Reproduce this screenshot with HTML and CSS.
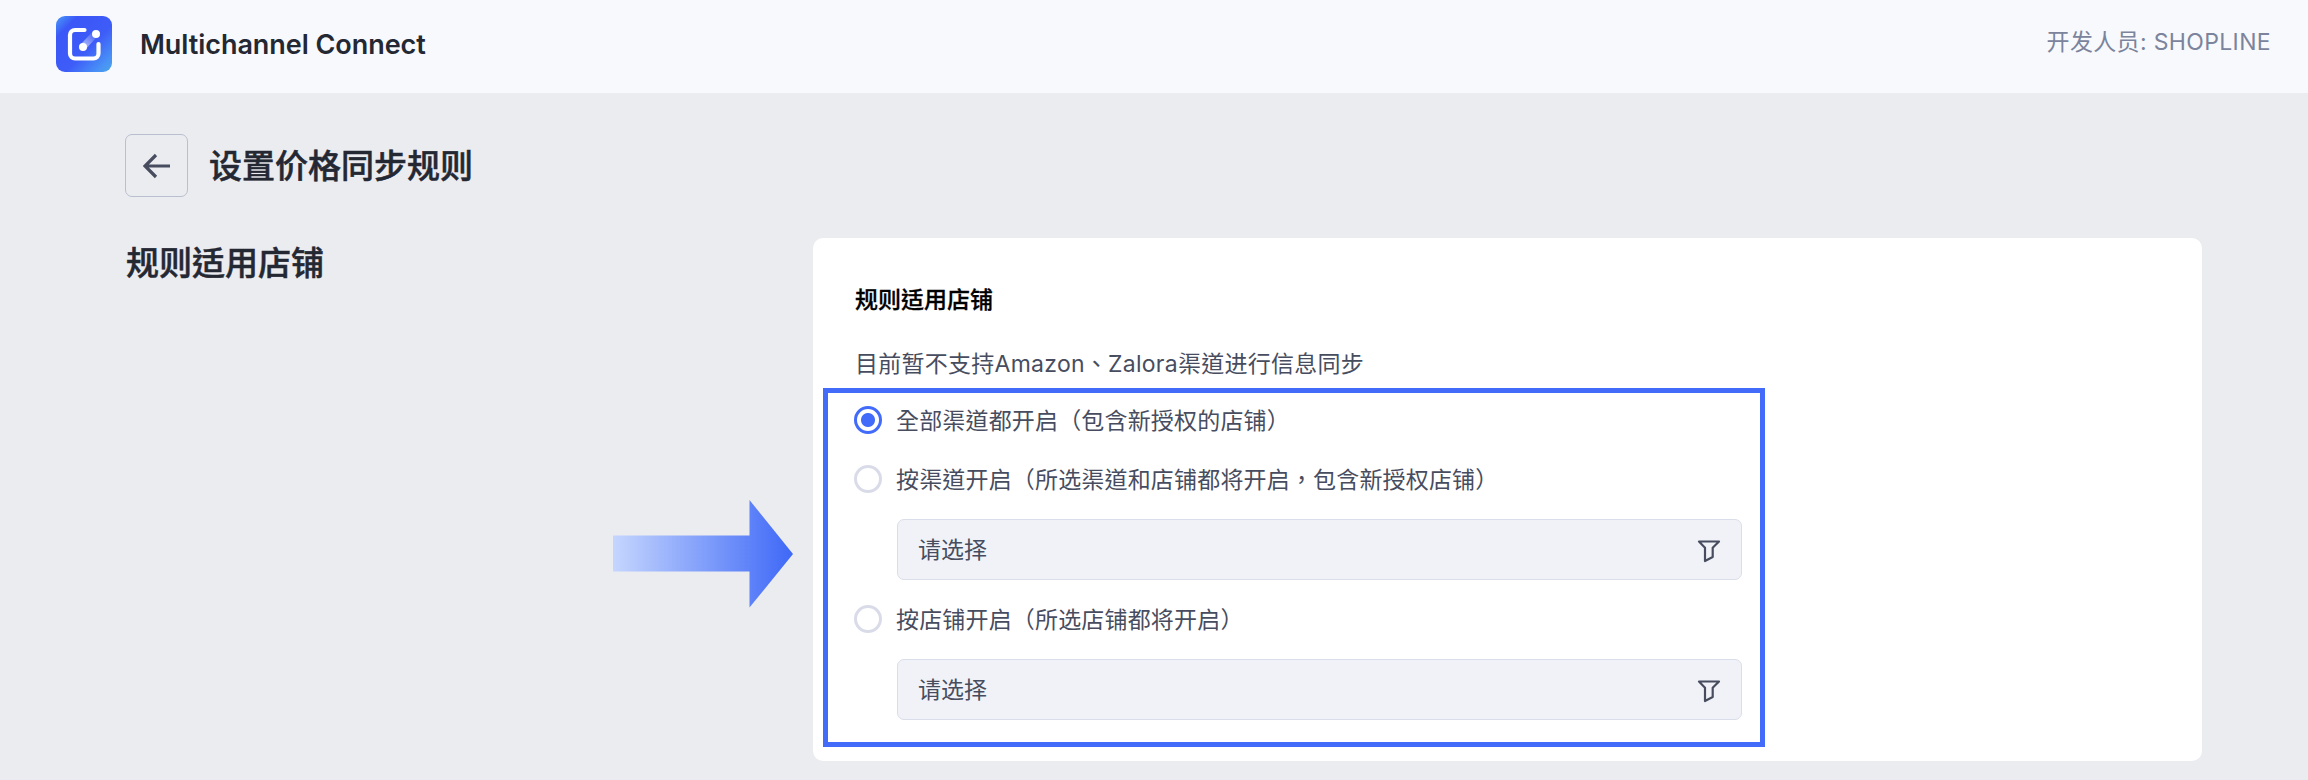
FILE: index.html
```html
<!DOCTYPE html>
<html lang="zh-TW">
  <head>
    <meta charset="UTF-8" />
    <meta name="viewport" content="width=device-width, initial-scale=1.0" />
    <title>Multichannel Connect</title>
    <link rel="stylesheet" href="styles.css">
  </head>
  <body>
    <header class="header">
      <svg class="logo" viewBox="0 0 56 56">
        <defs>
          <linearGradient id="logo_bg" x1="0" y1="0" x2="1" y2="1">
            <stop offset="0" stop-color="#4a9cf8" />
            <stop offset="0.2" stop-color="#3b57f7" />
            <stop offset="0.58" stop-color="#3e5cf8" />
            <stop offset="0.85" stop-color="#4890f6" />
            <stop offset="1" stop-color="#4ca6e8" />
          </linearGradient>
          <linearGradient id="logo_trail" gradientUnits="userSpaceOnUse" x1="27" y1="31" x2="39" y2="18">
            <stop offset="0" stop-color="#fff" stop-opacity="0.6" />
            <stop offset="1" stop-color="#fff" stop-opacity="0.05" />
          </linearGradient>
        </defs>
        <rect width="56" height="56" rx="9" fill="url(#logo_bg)" />
        <path d="M27 31L38 19" stroke="url(#logo_trail)" stroke-width="7" fill="none" />
        <path d="M28.500 14H19a5 5 0 0 0-5 5v18.500a5 5 0 0 0 5 5h18.500a5 5 0 0 0 5-5V28" fill="none" stroke="#fff" stroke-width="4.200" stroke-linecap="round" />
        <circle cx="27" cy="31" r="4" fill="#fff" />
        <circle cx="40" cy="18" r="4" fill="#fff" />
      </svg>
      <h1 class="app-name">Multichannel Connect</h1>
      <span class="developer">开发人员: SHOPLINE</span>
    </header>
    <main class="page">
      <div class="page-title">
        <button class="back" aria-label="返回">
          <svg width="28" height="26" viewBox="0 0 28 26">
            <path d="M27 13H2M13 2L2 13L13 24" />
          </svg>
        </button>
        <h2>设置价格同步规则</h2>
      </div>
      <div class="content">
        <h2 class="side-title">规则适用店铺</h2>
        <section class="card">
          <h3>规则适用店铺</h3>
          <p class="hint">目前暂不支持Amazon、Zalora渠道进行信息同步</p>
          <div class="options">
            <label class="option">
              <input type="radio" name="scope" checked />
              <span>全部渠道都开启（包含新授权的店铺）</span>
            </label>
            <label class="option">
              <input type="radio" name="scope" />
              <span>按渠道开启（所选渠道和店铺都将开启，包含新授权店铺）</span>
            </label>
            <div class="select">
              <span>请选择</span>
              <svg class="filter" viewBox="0 0 24 24">
                <path d="M2 2.500H22L15.700 8.700V18L8 22V8.700Z" />
              </svg>
            </div>
            <label class="option">
              <input type="radio" name="scope" />
              <span>按店铺开启（所选店铺都将开启）</span>
            </label>
            <div class="select">
              <span>请选择</span>
              <svg class="filter" viewBox="0 0 24 24">
                <path d="M2 2.500H22L15.700 8.700V18L8 22V8.700Z" />
              </svg>
            </div>
          </div>
          <svg class="pointer" viewBox="0 0 180 108">
            <defs>
              <linearGradient id="pointer_fill" x1="0" y1="0" x2="1" y2="0">
                <stop offset="0" stop-color="#c5d6fe" />
                <stop offset="1" stop-color="#3e68f7" />
              </linearGradient>
            </defs>
            <path d="M0 35.500H136.500V0L180 54L136.500 107.500V71.500H0Z" fill="url(#pointer_fill)" />
          </svg>
        </section>
      </div>
    </main>
  </body>
</html>
```
FILE: styles.css
```css
* {
  box-sizing: border-box;
}
body {
  font-family: Inter, "Noto Sans CJK TC", sans-serif;
  background-color: #ebecf0;
  color: #474d5e;
  font-size: 23px;
  margin: 0;
}
h1,
h2,
h3,
p {
  margin: 0;
}
.header {
  display: flex;
  align-items: center;
  height: 93px;
  padding: 0 37px 5px 56px;
  background-color: #f7f9fd;
}
.logo {
  width: 56px;
  height: 56px;
}
.app-name {
  margin-left: 28px;
  font-size: 27px;
  font-weight: 600;
  letter-spacing: -0.05px;
  color: #242833;
}
.developer {
  margin-left: auto;
  padding-bottom: 8px;
  letter-spacing: 0.35px;
  color: #7b849c;
}
.page {
  padding: 41px 106px 0 125px;
}
.page-title {
  display: flex;
  align-items: center;
  gap: 21px;
  height: 63px;
}
h2 {
  font-size: 33px;
  font-weight: 500;
  line-height: 48px;
  color: #242833;
  -webkit-text-stroke: 0.5px #242833;
}
.back {
  display: flex;
  align-items: center;
  justify-content: center;
  width: 63px;
  height: 63px;
  padding: 0;
  border: 1px solid #b9bfce;
  border-radius: 7px;
  background: none;
}
.back path {
  fill: none;
  stroke: #474d5e;
  stroke-width: 3.200;
}
.content {
  display: grid;
  grid-template-columns: 688px 1fr;
  margin-top: 41px;
}
.side-title {
  padding: 1px 0 0 1px;
}
.card {
  position: relative;
  height: 523px;
  padding: 46px 42px 0 10px;
  border-radius: 10px;
  background-color: #fff;
}
.card h3 {
  margin-left: 32px;
  font-size: 23px;
  font-weight: 500;
  line-height: 32px;
  color: #000;
  -webkit-text-stroke: 0.3px #000;
}
.hint {
  margin: 32px 0 0 32px;
  line-height: 32px;
  letter-spacing: 0.26px;
}
.options {
  width: 942px;
  height: 359px;
  margin-top: 8px;
  padding: 11px 18px 0 26px;
  border: 5px solid #426bfa;
}
.option {
  display: flex;
  align-items: center;
  gap: 14px;
  height: 32px;
}
.option span {
  padding-bottom: 2px;
  letter-spacing: 0.17px;
}
.option + .option {
  margin-top: 27px;
}
.option input {
  appearance: none;
  width: 28px;
  height: 28px;
  margin: 0;
  border: 3px solid #d9dce8;
  border-radius: 50%;
}
.option input:checked {
  border-color: #426bfa;
  background: radial-gradient(circle, #426bfa 6.500px, #fff 7.500px);
}
.select {
  display: flex;
  align-items: center;
  justify-content: space-between;
  height: 61px;
  margin: 24px 0 23px 43px;
  padding: 0 20px;
  border: 1px solid #dadeea;
  border-radius: 7px;
  background-color: #f1f2f8;
}
.select span {
  padding-bottom: 4px;
}
.filter {
  width: 24px;
  height: 24px;
  margin-top: 2px;
  fill: none;
  stroke: #474d5e;
  stroke-width: 2.200;
  stroke-linejoin: round;
}
/* callout arrow, sits left of the card */
.pointer {
  position: absolute;
  top: 262px;
  left: -200px;
  width: 180px;
  height: 108px;
}
```
